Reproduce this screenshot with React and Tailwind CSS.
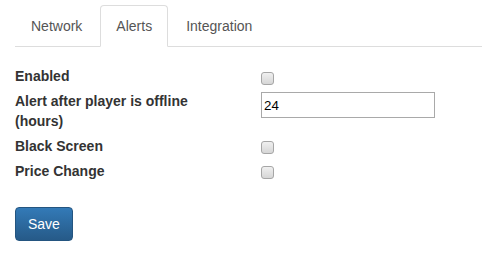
import React, { useState } from 'react';

const TABS = ['Network', 'Alerts', 'Integration'];

const Check = ({ className = '' }) => (
  <input
    type="checkbox"
    className={`appearance-none w-[13px] h-[13px] rounded-[3px] border border-[#a6a6a6] bg-gradient-to-b from-[#f0f0f0] to-[#d6d6d6] ${className}`}
  />
);

const Row = ({ label, children }) => (
  <>
    <div className="font-bold text-[#333] leading-[20px] mb-[5px] pr-[20px]">{label}</div>
    <div className="mb-[5px]">{children}</div>
  </>
);

export default function App() {
  const [active, setActive] = useState('Alerts');

  return (
    <div className="w-[482px] h-[262px] bg-white text-[14px] overflow-hidden" style={{ fontFamily: '"Liberation Sans", Arial, sans-serif' }}>
      {/* tabs */}
      <div className="pl-[15px] pt-[5px]">
        <ul className="flex border-b border-[#ddd]">
          {TABS.map(t => (
            <li key={t} className="mr-[2px] -mb-px">
              <button
                onClick={() => setActive(t)}
                className={
                  'block px-[15px] py-[10px] leading-[20px] text-[#555] rounded-t-[4px] border ' +
                  (active === t ? 'bg-white border-[#ddd] border-b-white' : 'border-transparent')
                }
              >
                {t}
              </button>
            </li>
          ))}
        </ul>
      </div>

      {/* form */}
      <div className="px-[15px] pt-[19px]">
        <div className="grid grid-cols-[246px_1fr]">
          <Row label="Enabled">
            <Check className="mt-[6px] block" />
          </Row>
          <Row label={<>Alert after player is offline<br />(hours)</>}>
            <input
              type="text"
              defaultValue="24"
              className="block mt-px w-[174px] h-[26px] border border-[#a9a9a9] px-[2px] text-[13.33px] text-black outline-none"
            />
          </Row>
          <Row label="Black Screen">
            <Check className="mt-[5px] block" />
          </Row>
          <Row label="Price Change">
            <Check className="mt-[5px] block" />
          </Row>
        </div>

        <button className="mt-[21px] h-[34px] px-[12px] rounded-[4px] border border-[#245580] bg-gradient-to-b from-[#337ab7] to-[#265a88] text-white leading-[20px]">
          Save
        </button>
      </div>
    </div>
  );
}
